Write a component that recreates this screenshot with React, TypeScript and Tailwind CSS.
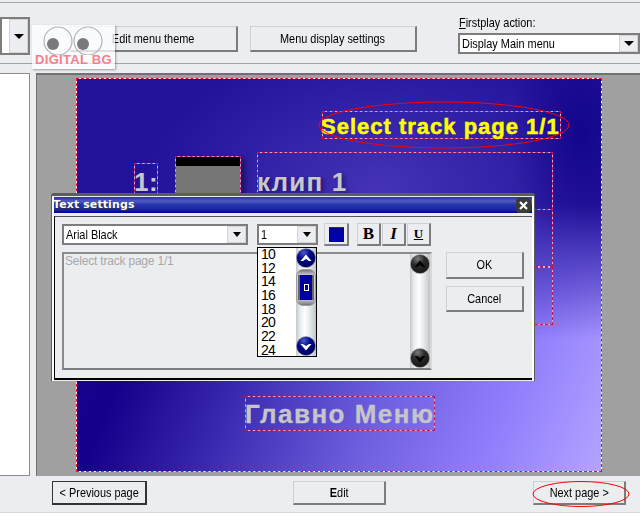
import type { ReactNode } from 'react';

const uiFont = "font-['Liberation_Sans',Arial,sans-serif]";
const raisedBtn =
  'flex items-center justify-center border border-[#cfd0d2] border-r-2 border-b-2 border-r-[#7c7c7c] border-b-[#7c7c7c] bg-[#ecedf1] text-[13px] text-black';

const sizes = ['10', '12', '14', '16', '18', '20', '22', '24'];

// the original UI font is a tall, condensed one
function Narrow({ children, left }: { children: ReactNode; left?: boolean }) {
  return <span className={`inline-block scale-x-[0.84] whitespace-nowrap ${left ? 'origin-left' : ''}`}>{children}</span>;
}

function Arrow({ big }: { big?: boolean }) {
  return (
    <div
      className={
        big
          ? 'h-0 w-0 border-x-[5px] border-t-[5px] border-x-transparent border-t-black'
          : 'h-0 w-0 border-x-[4px] border-t-[5px] border-x-transparent border-t-black'
      }
    />
  );
}

function Combo({ value, width, height = 'h-[21px]', big }: { value: string; width: string; height?: string; big?: boolean }) {
  return (
    <div className={`flex border-2 border-[#7d7d7d] bg-white ${width} ${height}`}>
      <div className="flex-1 overflow-hidden pl-[2px] text-[13px] leading-[17px] text-black">
        <Narrow left>{value}</Narrow>
      </div>
      <div className="flex w-[19px] items-center justify-center border border-[#d4d4d4] bg-[#ecedf1]">
        <Arrow big={big} />
      </div>
    </div>
  );
}

function Globe({ dir, dark }: { dir: 'up' | 'down'; dark?: boolean }) {
  const id = `globe-${dir}-${dark ? 'd' : 'b'}`;
  const c = dark ? ['#7c7c7c', '#2c2c2c', '#141414'] : ['#4a58c8', '#000a88', '#000058'];
  return (
    <svg width="20" height="20" viewBox="0 0 20 20" className="shrink-0">
      <defs>
        <radialGradient id={id} cx="0.38" cy="0.22" r="0.85">
          <stop offset="0" stopColor={c[0]} />
          <stop offset="0.4" stopColor={c[1]} />
          <stop offset="1" stopColor={c[2]} />
        </radialGradient>
      </defs>
      <circle cx="10" cy="10" r="9.6" fill={`url(#${id})`} stroke="#a8a8a8" strokeWidth="0.6" />
      {dir === 'up' ? (
        <path d="M4.5 13 L10 6.5 L15.5 13 L13 13 L10 11 L7 13 Z" fill={dark ? '#000' : '#fff'} />
      ) : (
        <path d="M4.5 8 L7 8 L10 10 L13 8 L15.5 8 L10 14.5 Z" fill={dark ? '#000' : '#fff'} />
      )}
    </svg>
  );
}

function ScrollTrack({ children }: { children?: ReactNode }) {
  return (
    <div className="flex h-full w-[20px] flex-col items-center justify-between bg-[linear-gradient(to_right,#c4c8cb,#e8edef_20%,#ffffff_45%,#e2e9ed_70%,#bfc4c7)]">
      {children}
    </div>
  );
}

function Marker({ className, faint }: { className: string; faint?: boolean }) {
  return (
    <div
      className={`absolute border outline outline-1 -outline-offset-1 outline-dashed ${
        faint ? 'border-[#c4b6e8] outline-[#c0185c]' : 'border-white outline-[#e8103a]'
      } ${className}`}
    />
  );
}

function TextDialog() {
  return (
    <div className="absolute left-[51px] top-[193px] h-[188px] w-[484px] rounded-t-[3px] border border-t-[3px] border-[#5c5c5c] bg-[#ecedf1]">
      <div className="h-full border-x-2 border-b border-x-white border-b-[#ecedf1]">
        {/* title bar */}
        <div className="mt-[1px] flex h-[16px] items-center justify-between bg-[linear-gradient(to_bottom,#2a2ea8,#4f5cc0_25%,#2433ac_50%,#1a24a4_80%,#0000a0)] pr-[1px]">
          <span className="-ml-[1px] font-['DejaVu_Sans',sans-serif] text-[11px] font-bold tracking-[0.1px] text-white [text-shadow:1px_1px_0_#333]">
            Text settings
          </span>
          <div className="flex h-[15px] w-[15px] items-center justify-center rounded-[4px] bg-[#3a3a3a]">
            <svg width="9" height="9" viewBox="0 0 9 9">
              <path d="M1 1 L8 8 M8 1 L1 8" stroke="#fff" strokeWidth="2.2" />
            </svg>
          </div>
        </div>
        {/* body */}
        <div className="mt-[3px] h-[164px] border-b-2 border-l border-t border-b-black border-l-black border-t-[#555] pl-[7px] pt-[7px]">
          <div className="flex items-start">
            <Combo value="Arial Black" width="w-[186px]" />
            <div className="ml-[9px]">
              <Combo value="1" width="w-[61px]" />
            </div>
            <div className="-mt-[1px] ml-[6px] flex h-[23px] w-[25px] items-center justify-center border border-[#cfd0d2] border-b-2 border-r-2 border-b-[#7c7c7c] border-r-[#7c7c7c]">
              <div className="h-[15px] w-[15px] border-t border-[#333] bg-[#0000a8]" />
            </div>
            <div className="-mt-[1px] ml-[8px] flex gap-[1px]">
              <div className={`${raisedBtn} h-[23px] w-[24px] font-['Liberation_Serif',serif] !text-[17px] font-bold`}>B</div>
              <div className={`${raisedBtn} h-[23px] w-[24px] font-['Liberation_Serif',serif] !text-[17px] font-bold italic`}>I</div>
              <div className={`${raisedBtn} h-[23px] w-[24px] font-['Liberation_Serif',serif] !text-[13px] font-bold underline`}>U</div>
            </div>
          </div>
          <div className="mt-[6px] flex items-start">
            <div className="flex h-[118px] w-[370px] justify-between border-2 border-[#8c8c8c] border-b-[#7c7c7c] border-r-[#d8d8d8] pl-[1px]">
              <span className="text-[12px] leading-[14px] tracking-[-0.2px] text-[#a8a8a8]">Select track page 1/1</span>
              <ScrollTrack>
                <Globe dir="up" dark />
                <Globe dir="down" dark />
              </ScrollTrack>
            </div>
            <div className="ml-[14px] flex flex-col gap-[7px]">
              <div className={`${raisedBtn} h-[27px] w-[78px]`}>
                <Narrow>OK</Narrow>
              </div>
              <div className={`${raisedBtn} h-[26px] w-[78px]`}>
                <Narrow>Cancel</Narrow>
              </div>
            </div>
          </div>
        </div>
      </div>
      {/* size dropdown */}
      <div className="absolute left-[205px] top-[51px] flex h-[110px] w-[60px] border border-black bg-white">
        <div className="flex-1 pl-[3px]">
          {sizes.map(s => (
            <div key={s} className="h-[13.7px] text-[14px] leading-[13.7px] tracking-[-0.9px] text-black">
              {s}
            </div>
          ))}
        </div>
        <ScrollTrack>
          <Globe dir="up" />
          <div className="absolute right-0 top-[21px] flex h-[37px] w-[20px] items-center justify-center rounded-[7px] border border-[#9a9a9a] bg-[linear-gradient(to_bottom,#777,#d4d4d4_16%,#c8c8c8_84%,#777)]">
            <div className="flex h-[25px] w-[16px] items-center justify-center border-x-2 border-[#666] bg-[#0000a0]">
              <div className="h-[7px] w-[5px] border border-white" />
            </div>
          </div>
          <Globe dir="down" />
        </ScrollTrack>
      </div>
    </div>
  );
}

function Watermark() {
  return (
    <div className="absolute left-[32px] top-[25px] flex h-[44px] w-[83px] flex-col items-center bg-white/75 shadow-[1px_1px_2px_rgba(0,0,0,0.35)]">
      <svg width="83" height="30" viewBox="0 0 83 30" className="shrink-0">
        <circle cx="26" cy="16" r="14" fill="none" stroke="#b4b4b4" strokeWidth="1.2" />
        <circle cx="56" cy="16" r="14" fill="none" stroke="#b4b4b4" strokeWidth="1.2" />
        <circle cx="21" cy="19" r="6" fill="#7a7a7a" />
        <circle cx="51" cy="19" r="6" fill="#7a7a7a" />
      </svg>
      <span className="-mt-[2px] whitespace-nowrap text-[13px] font-bold leading-[14px] tracking-[0.3px] text-[#f5808c]">DIGITAL BG</span>
    </div>
  );
}

function PreviewCanvas() {
  return (
    <div className="relative ml-[39px] mt-[3px] h-[394px] w-[526px] bg-[linear-gradient(112deg,#1a0a90_0%,#14008a_24%,#3a2ab0_42%,#6f60e0_64%,#8f7dfc_82%,#b4a4ff_100%)]">
      <div className="absolute inset-0 bg-[radial-gradient(ellipse_70px_130px_at_96%_14%,#14068a,rgba(20,6,138,0)),radial-gradient(ellipse_240px_150px_at_58%_28%,#4433b6,rgba(36,20,155,0)),linear-gradient(#22129a,#22129a)] [mask-image:linear-gradient(to_bottom,black_32%,transparent_66%)]" />
      <Marker className="inset-0" />
      <Marker faint className="left-[246px] top-[33px] h-[28px] w-[239px]" />
      <span className="absolute left-[245px] top-[35px] whitespace-nowrap text-[22px] font-bold leading-[28px] tracking-[1px] text-[#ffff00] [-webkit-text-stroke:0.5px_#ffff00]">
        Select track page 1/1
      </span>
      <Marker faint className="left-[58px] top-[85px] h-[40px] w-[24px]" />
      <span className="absolute left-[58px] top-[91px] text-[26px] font-bold leading-[26px] tracking-[0.6px] text-[#c8c8c8]">1:</span>
      <div className="absolute left-[99px] top-[78px] h-[60px] w-[66px] border-t-[10px] border-black bg-[#777] shadow-[4px_3px_6px_rgba(0,0,30,0.5)]" />
      <Marker faint className="left-[99px] top-[78px] h-[60px] w-[66px]" />
      <Marker faint className="left-[181px] top-[74px] h-[58px] w-[296px]" />
      <span className="absolute left-[181px] top-[91px] text-[26px] font-bold leading-[26px] tracking-[1.2px] text-[#c8c8c8] [text-shadow:3px_2px_4px_rgba(20,10,80,0.6)]">
        клип 1
      </span>
      <Marker faint className="left-[181px] top-[131px] h-[58px] w-[296px]" />
      <Marker faint className="left-[181px] top-[189px] h-[58px] w-[296px]" />
      <Marker faint className="left-[169px] top-[318px] h-[35px] w-[190px]" />
      <span className="absolute left-[169px] top-[321px] whitespace-nowrap text-[26px] font-bold leading-[30px] tracking-[1.5px] text-[#c6c6c6] [-webkit-text-stroke:0.3px_#c6c6c6]">
        Главно Меню
      </span>
    </div>
  );
}

export default function App() {
  return (
    <div className={`relative flex h-[513px] w-[640px] flex-col overflow-hidden bg-[#ecedf1] ${uiFont}`}>
      {/* toolbar */}
      <div className="mt-[2px] flex h-[62px] items-start border-y border-y-[#a4a4a4]">
        <div className="mt-[14px]">
          <Combo value="" width="w-[30px]" height="h-[38px]" big />
        </div>
        <div className={`${raisedBtn} ml-[40px] mt-[23px] h-[26px] w-[168px]`}>
          <Narrow>Edit menu theme</Narrow>
        </div>
        <div className={`${raisedBtn} ml-[12px] mt-[23px] h-[26px] w-[167px]`}>
          <Narrow>Menu display settings</Narrow>
        </div>
        <div className="ml-[41px] mt-[12px] flex flex-col">
          <span className="mb-[3px] ml-[1px] text-[13px] leading-[15px] text-black">
            <Narrow left>
              <span className="underline">F</span>irstplay action:
            </Narrow>
          </span>
          <Combo value="Display Main menu" width="w-[182px]" big />
        </div>
      </div>
      {/* work area */}
      <div className="mt-[9px] flex h-[403px] gap-[6px]">
        <div className="h-full w-[30px] border-y border-r border-y-[#8c8c8c] border-r-[#8c8c8c] bg-white" />
        <div className="h-full flex-1 border-l border-t-2 border-l-[#707070] border-t-[#707070] bg-[#a0a0a0]">
          <PreviewCanvas />
        </div>
      </div>
      {/* bottom buttons */}
      <div className="mt-[5px] flex h-[25px] items-start pl-[52px]">
        <div className={`${raisedBtn} h-[24px] w-[95px] !border-2 !border-l !border-t !border-[#333]`}>
          <Narrow>&lt; Previous page</Narrow>
        </div>
        <div className={`${raisedBtn} ml-[146px] h-[24px] w-[93px]`}>
          <Narrow>
            <span className="font-bold">E</span>dit
          </Narrow>
        </div>
        <div className={`${raisedBtn} ml-[147px] h-[24px] w-[93px]`}>
          <Narrow>Next page &gt;</Narrow>
        </div>
      </div>
      <div className="mt-auto h-[1px] bg-[#d8d8d8]" />

      <Watermark />
      {/* hand-drawn ellipses */}
      <svg className="pointer-events-none absolute left-0 top-0" width="640" height="513" viewBox="0 0 640 513">
        <ellipse cx="444" cy="125" rx="125" ry="23" fill="none" stroke="#ff0000" strokeWidth="1" />
        <ellipse cx="581" cy="494" rx="48" ry="12.5" fill="none" stroke="#ff0000" strokeWidth="1" />
      </svg>
      <TextDialog />
    </div>
  );
}
